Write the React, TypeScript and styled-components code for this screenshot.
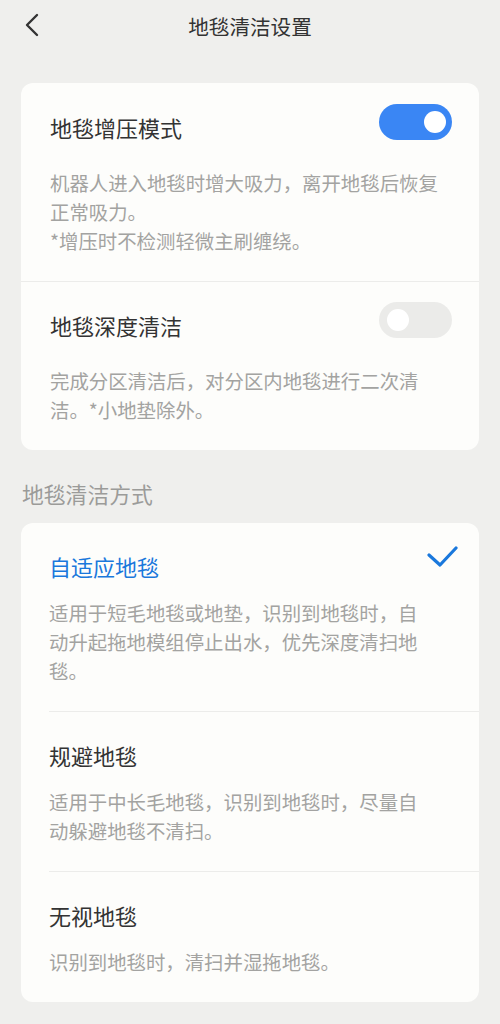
import styled, { createGlobalStyle } from "styled-components";

const GlobalStyle = createGlobalStyle`
  html, body {
    margin: 0;
    padding: 0;
    background: #efefed;
    font-family: "Noto Sans CJK SC", "Noto Sans", sans-serif;
  }
`;

const toggleItems = [
  {
    title: "地毯增压模式",
    on: true,
    desc: ["机器人进入地毯时增大吸力，离开地毯后恢复正常吸力。", "*增压时不检测轻微主刷缠绕。"],
  },
  {
    title: "地毯深度清洁",
    on: false,
    desc: ["完成分区清洁后，对分区内地毯进行二次清洁。*小地垫除外。"],
  },
];

const modeItems = [
  {
    title: "自适应地毯",
    desc: "适用于短毛地毯或地垫，识别到地毯时，自动升起拖地模组停止出水，优先深度清扫地毯。",
  },
  {
    title: "规避地毯",
    desc: "适用于中长毛地毯，识别到地毯时，尽量自动躲避地毯不清扫。",
  },
  {
    title: "无视地毯",
    desc: "识别到地毯时，清扫并湿拖地毯。",
  },
];

export default function App() {
  const selected = 0;
  return (
    <Page>
      <GlobalStyle />
      <Header>
        <BackButton>
          <svg width="16" height="24" viewBox="0 0 16 24" fill="none">
            <path
              d="M13 2 L3 12 L13 22"
              stroke="#333"
              strokeWidth="2.4"
              strokeLinecap="round"
              strokeLinejoin="round"
            />
          </svg>
        </BackButton>
        <HeaderTitle>地毯清洁设置</HeaderTitle>
      </Header>

      <Card $top={31}>
        {toggleItems.map((item, key) => (
          <ToggleItem key={key} $first={key === 0}>
            <ToggleRow>
              <ItemTitle>{item.title}</ItemTitle>
              <Switch $on={item.on}>
                <Knob />
              </Switch>
            </ToggleRow>
            <ToggleDesc>
              {item.desc.map((line, i) => (
                <div key={i}>{line}</div>
              ))}
            </ToggleDesc>
          </ToggleItem>
        ))}
      </Card>

      <SectionLabel>地毯清洁方式</SectionLabel>

      <Card $top={0}>
        {modeItems.map((item, key) => (
          <ModeItem key={key} $first={key === 0}>
            <ModeRow>
              <ModeTitle $active={key === selected}>{item.title}</ModeTitle>
              {key === selected && (
                <CheckIcon width="32" height="24" viewBox="0 0 32 24" fill="none">
                  <path
                    d="M2 10 L13 20 L29 3"
                    stroke="#1a78dc"
                    strokeWidth="3.2"
                    strokeLinecap="round"
                    strokeLinejoin="round"
                  />
                </CheckIcon>
              )}
            </ModeRow>
            <ModeDesc>{item.desc}</ModeDesc>
          </ModeItem>
        ))}
      </Card>
    </Page>
  );
}

const Page = styled.div`
  box-sizing: border-box;
  width: 500px;
  min-height: 1024px;
  padding: 0 21px 20px;
  background: #efefed;
`;

const Header = styled.header`
  position: relative;
  height: 52px;
  display: flex;
  align-items: center;
  justify-content: center;
`;

const BackButton = styled.div`
  position: absolute;
  left: 3px;
  top: 13px;
  width: 16px;
  height: 24px;
`;

const HeaderTitle = styled.h1`
  margin: 0;
  font-size: 20.6px;
  font-weight: 400;
  color: #333;
  line-height: 30px;
`;

const Card = styled.section<{ $top: number }>`
  margin-top: ${(p) => p.$top}px;
  background: #fdfdfb;
  border-radius: 12px;
  overflow: hidden;
`;

const ToggleItem = styled.div<{ $first: boolean }>`
  padding: ${(p) => (p.$first ? "21px" : "20px")} 27px 26px 29px;
  border-top: ${(p) => (p.$first ? "none" : "1px solid #ececea")};
`;

const ToggleRow = styled.div`
  display: flex;
  justify-content: space-between;
  align-items: flex-start;
  height: 36px;
`;

const ItemTitle = styled.div`
  margin-top: 8px;
  font-size: 22px;
  line-height: 30px;
  color: #333;
`;

const Switch = styled.div<{ $on: boolean }>`
  width: 73px;
  height: 36px;
  border-radius: 18px;
  background: ${(p) => (p.$on ? "#3a86f4" : "#ebebe9")};
  display: flex;
  align-items: center;
  justify-content: ${(p) => (p.$on ? "flex-end" : "flex-start")};
  padding: 0 6px 0 8px;
  box-sizing: border-box;
`;

const Knob = styled.div`
  width: 22px;
  height: 22px;
  border-radius: 50%;
  background: #fff;
`;

const ToggleDesc = styled.div`
  margin-top: 28px;
  width: 396px;
  font-size: 19.4px;
  line-height: 29px;
  color: #a3a3a1;
`;

const SectionLabel = styled.div`
  padding: 29px 1px 14px;
  font-size: 21.8px;
  line-height: 30px;
  color: #9b9b99;
`;

const ModeItem = styled.div<{ $first: boolean }>`
  padding: 28px 20px 26px 0;
  margin-left: 28px;
  border-top: ${(p) => (p.$first ? "none" : "1px solid #ececea")};
`;

const ModeRow = styled.div`
  position: relative;
  display: flex;
  align-items: center;
`;

const ModeTitle = styled.div<{ $active: boolean }>`
  font-size: 22px;
  line-height: 30px;
  color: ${(p) => (p.$active ? "#1a78dc" : "#333")};
`;

const CheckIcon = styled.svg`
  position: absolute;
  right: 0;
  top: -6px;
`;

const ModeDesc = styled.div`
  margin-top: 17px;
  width: 378px;
  font-size: 19.4px;
  line-height: 29px;
  color: #a3a3a1;
`;
